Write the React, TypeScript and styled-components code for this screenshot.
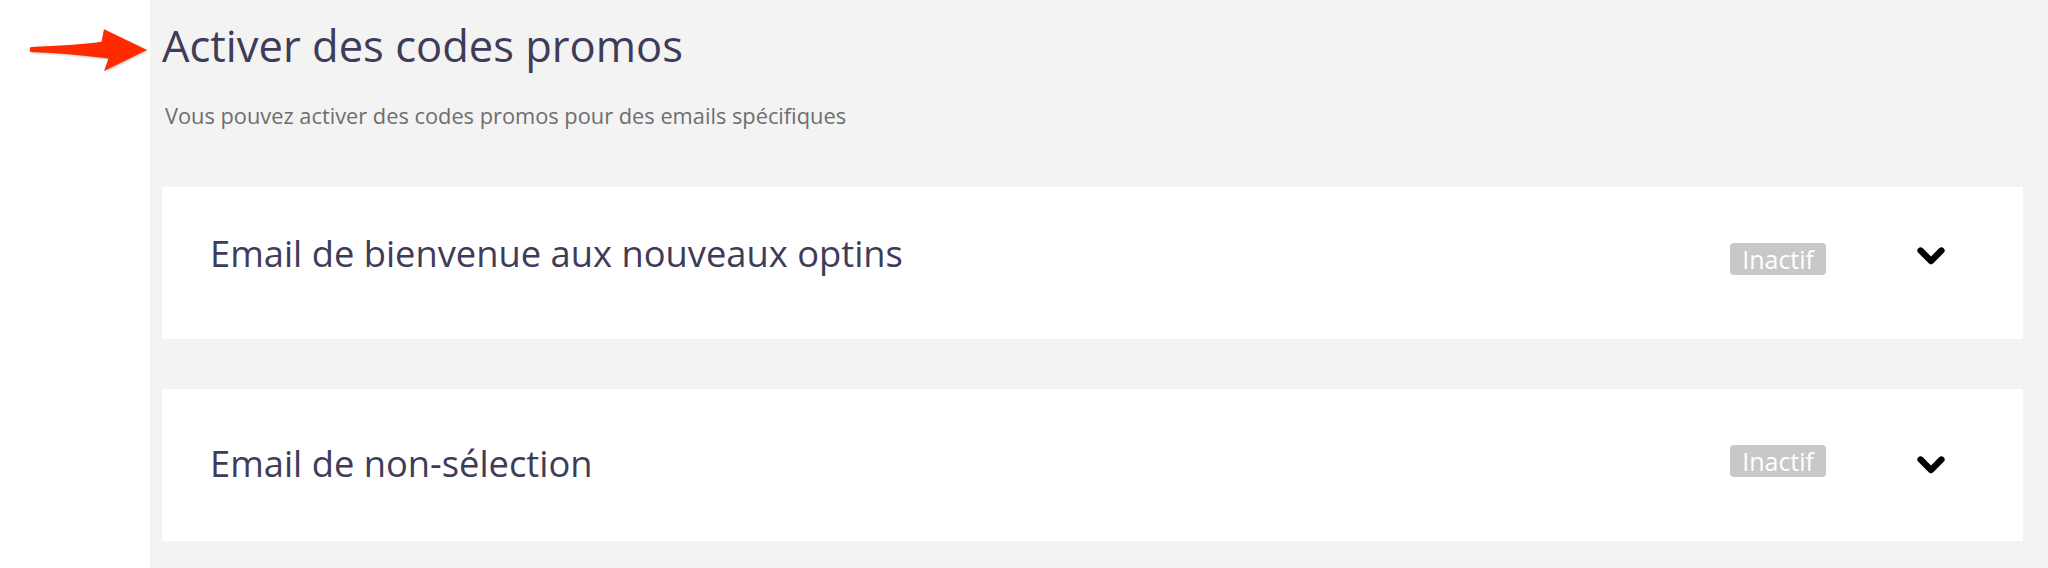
import React from "react";
import styled, { createGlobalStyle } from "styled-components";

const GlobalStyle = createGlobalStyle`
  html, body {
    margin: 0;
    padding: 0;
    background: #ffffff;
    font-family: "Open Sans", "Liberation Sans", sans-serif;
  }
`;

const Page = styled.div`
  display: flex;
  width: 2048px;
  height: 568px;
  overflow: hidden;
`;

const Gutter = styled.aside`
  flex: 0 0 150px;
  background: #ffffff;
`;

const ArrowSvg = styled.svg`
  display: block;
  filter: drop-shadow(1px 1.5px 1px rgba(0, 0, 0, 0.25));
`;

const Main = styled.main`
  flex: 1;
  background: #f3f3f3;
  padding: 16px 25px 0 12px;
  display: flex;
  flex-direction: column;
`;

const Title = styled.h1`
  margin: 0;
  font-size: 43.5px;
  line-height: 60px;
  font-weight: 400;
  color: #3e3c58;
`;

const Subtitle = styled.p`
  margin: 26px 0 0 3px;
  font-size: 21.8px;
  line-height: 28px;
  color: #6e6e6e;
`;

const CardList = styled.div`
  display: flex;
  flex-direction: column;
  gap: 50px;
  margin-top: 57px;
`;

const Card = styled.section`
  background: #ffffff;
  height: 152px;
  display: flex;
  align-items: center;
  padding: 0 78px 0 48px;
  box-sizing: border-box;
`;

const CardTitle = styled.h2<{ $lift: number }>`
  flex: 1;
  margin: 0 0 ${(p) => p.$lift * 2}px 0;
  font-size: 36.3px;
  line-height: 50px;
  font-weight: 400;
  color: #3e3c58;
`;

const Badge = styled.span`
  display: inline-block;
  height: 32px;
  line-height: 32px;
  padding: 0 12px;
  margin-bottom: 9px;
  border-radius: 4px;
  background: #c8c8c8;
  color: #ffffff;
  font-size: 25px;
`;

const Chevron = styled.svg<{ $lift: number }>`
  display: block;
  margin-left: 91px;
  margin-bottom: ${(p) => p.$lift * 2}px;
  flex: 0 0 auto;
`;

const ChevronDown = ({ lift }: { lift: number }) => (
  <Chevron $lift={lift} width="28" height="19" viewBox="0 0 28 19">
    <polyline
      points="3.6,3.6 14,14 24.4,3.6"
      fill="none"
      stroke="#000"
      strokeWidth="6.4"
      strokeLinecap="round"
      strokeLinejoin="round"
    />
  </Chevron>
);

const emails = [
  { title: "Email de bienvenue aux nouveaux optins", lift: 10, chevLift: 7 },
  { title: "Email de non-sélection", lift: 2, chevLift: 0 },
];

export default function App() {
  return (
    <>
      <GlobalStyle />
      <Page>
        <Gutter>
          <ArrowSvg width="150" height="90" viewBox="0 0 150 90">
            <path
              fill="#ff2a00"
              d="M31 47 C58 45.8 84 44.5 101.5 41.8 L104 29.3 L147 50 L104 71 L108.5 58.6 C86 55.6 58 53.2 31 52 C29.3 51.2 29.3 47.8 31 47 Z"
            />
          </ArrowSvg>
        </Gutter>
        <Main>
          <Title>Activer des codes promos</Title>
          <Subtitle>Vous pouvez activer des codes promos pour des emails spécifiques</Subtitle>
          <CardList>
            {emails.map((e) => (
              <Card key={e.title}>
                <CardTitle $lift={e.lift}>{e.title}</CardTitle>
                <Badge>Inactif</Badge>
                <ChevronDown lift={e.chevLift} />
              </Card>
            ))}
          </CardList>
        </Main>
      </Page>
    </>
  );
}
